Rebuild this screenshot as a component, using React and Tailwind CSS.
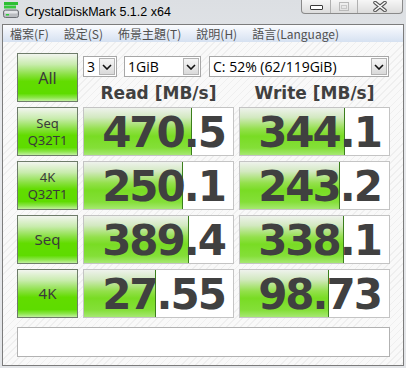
import React from 'react';

const rows = [
  { label: ['Seq', 'Q32T1'], read: '470.5', readW: 109, write: '344.1', writeW: 106 },
  { label: ['4K', 'Q32T1'], read: '250.1', readW: 100, write: '243.2', writeW: 101 },
  { label: ['Seq'], read: '389.4', readW: 106, write: '338.1', writeW: 105, big: true },
  { label: ['4K'], read: '27.55', readW: 73, write: '98.73', writeW: 90, big: true },
];

const greenBtn =
  'border border-[#6e7c6a] bg-[linear-gradient(to_bottom,#f2f5ef_0%,#c9ecae_22%,#86e03c_45%,#62dc00_58%,#5edc00_84%,#8de64c_93%,#c2f0a0_100%)]';

function Select({ w, text }) {
  return (
    <div className={`${w} h-[21px] flex items-center bg-white border border-[#a7a7a7]`}>
      <span className="pl-[3px] text-[14px] leading-none text-black font-['Open_Sans']">{text}</span>
      <div className="ml-auto mr-[1px] w-[16px] h-[17px] flex items-center justify-center border border-[#b3b3b3] bg-[linear-gradient(to_bottom,#f5f5f5,#dadada)]">
        <svg width="10" height="6" viewBox="0 0 10 6">
          <path d="M1 1 L5 5 L9 1" fill="none" stroke="#111" strokeWidth="1.6" />
        </svg>
      </div>
    </div>
  );
}

function Cell({ value, width }) {
  return (
    <div className="relative h-[49px] bg-white border border-[#c4c4c4] overflow-hidden">
      <div
        className="absolute left-0 top-0 bottom-0 border-r border-[#3b7e1c] bg-[linear-gradient(to_bottom,#eef2ec_0%,#d3e9c1_20%,#93e04b_45%,#79dc24_60%,#84df38_85%,#a6e872_100%)]"
        style={{ width: width - 1 }}
      />
      <div className="relative text-right pr-[8px] pt-[1px] leading-[47px] text-[42px] font-bold text-[#404040] font-['DejaVu_Sans',sans-serif] tracking-[-2px]">
        {value}
      </div>
    </div>
  );
}

export default function App() {
  return (
    <div className="w-[406px] h-[368px] overflow-hidden bg-[linear-gradient(to_bottom,#dcdfe3,#e7e9ec_30%,#e3e5e8)] font-['Open_Sans',sans-serif]">
      {/* title bar */}
      <div className="h-[24px] flex items-start">
        <svg className="ml-[3px] mt-[2px]" width="16" height="16" viewBox="0 0 16 16">
          <rect x="1" y="0" width="14" height="3" fill="#2dbf33" />
          <rect x="1" y="3.5" width="12" height="3" fill="#37c83c" />
          <rect x="0.5" y="8" width="15" height="7.5" rx="2" fill="#b9bcc0" stroke="#6d7176" />
          <rect x="1.5" y="9" width="13" height="2.5" rx="1" fill="#e3e5e8" />
          <rect x="3" y="12" width="3" height="1.5" fill="#2fd03a" />
        </svg>
        <span className="ml-[6px] mt-[3px] text-[12.5px] text-black font-['Liberation_Sans',sans-serif]">
          CrystalDiskMark 5.1.2 x64
        </span>
        <div className="ml-auto mr-[3px] h-[14px] flex rounded-b-[4px] border border-t-0 border-[#8a8a8a] overflow-hidden bg-[linear-gradient(to_bottom,#f6f6f6,#dcdcdc)]">
          <div className="w-[28px] flex items-center justify-center">
            <div className="mt-[2px] w-[13px] h-[5px] bg-white border border-[#3a3a3a] rounded-[1px]" />
          </div>
          <div className="w-[27px] flex items-center justify-center border-l border-[#b0b0b0]">
            <div className="w-[10px] h-[9px] border border-[#b9b9b9] flex items-center justify-center">
              <div className="w-[6px] h-[4px] border border-[#c8c8c8]" />
            </div>
          </div>
          <div className="w-[45px] flex items-center justify-center border-l border-[#b0b0b0]">
            <svg width="14" height="11" viewBox="0 0 14 11">
              <path d="M2 1.5 L12 9.5 M12 1.5 L2 9.5" stroke="#555" strokeWidth="3.6" strokeLinecap="round" />
              <path d="M2 1.5 L12 9.5 M12 1.5 L2 9.5" stroke="#fafafa" strokeWidth="1.6" strokeLinecap="round" />
            </svg>
          </div>
        </div>
      </div>

      {/* client */}
      <div className="ml-[2px] w-[402px] h-[342px] border border-[#7c7c7c] flex flex-col">
        <div className="h-[17px] flex items-center gap-[15px] pl-[7px] bg-[linear-gradient(to_bottom,#fbfcfe,#e8eef8_50%,#d6e1f1)] text-[12px] text-[#505050] font-['Noto_Sans_CJK_TC',sans-serif] leading-none">
          <span>檔案(F)</span>
          <span>設定(S)</span>
          <span>佈景主題(T)</span>
          <span>說明(H)</span>
          <span>語言(Language)</span>
        </div>

        <div className="flex-1 pl-[14px] pt-[11px] bg-[repeating-linear-gradient(135deg,#f9f9f9_0px,#f9f9f9_4px,#efefef_4px,#efefef_5px)]">
          <div className="grid grid-cols-[61px_151px_151px] gap-x-[5px] gap-y-[5px]">
            <div className={`${greenBtn} h-[49px] flex items-center justify-center`}>
              <span className="text-[16px] text-[#3a3a3a] font-['Noto_Sans',sans-serif]">All</span>
            </div>
            <div className="col-span-2 flex flex-col">
              <div className="mt-[3px] flex">
                <Select w="w-[34px]" text="3" />
                <div className="ml-[7px]">
                  <Select w="w-[77px]" text="1GiB" />
                </div>
                <div className="ml-[8px]">
                  <Select w="w-[180px]" text="C: 52% (62/119GiB)" />
                </div>
              </div>
              <div className="flex gap-[5px] pt-[7px] text-[17px] font-bold text-[#404040] font-['DejaVu_Sans',sans-serif] leading-[18px]">
                <div className="w-[151px] text-center">Read [MB/s]</div>
                <div className="w-[151px] text-center">Write [MB/s]</div>
              </div>
            </div>

            {rows.map((r, i) => (
              <React.Fragment key={i}>
                <div className={`${greenBtn} h-[49px] flex flex-col items-center justify-center`}>
                  {r.label.map((l) => (
                    <span
                      key={l}
                      className={`leading-[17px] text-[#3a3a3a] font-['Noto_Sans',sans-serif] ${
                        r.big ? 'text-[15px]' : 'text-[13px]'
                      }`}
                    >
                      {l}
                    </span>
                  ))}
                </div>
                <Cell value={r.read} width={r.readW} />
                <Cell value={r.write} width={r.writeW} />
              </React.Fragment>
            ))}
          </div>
          <div className="mt-[9px] w-[373px] h-[30px] bg-white border border-[#b2b2b2]" />
        </div>
      </div>
    </div>
  );
}
